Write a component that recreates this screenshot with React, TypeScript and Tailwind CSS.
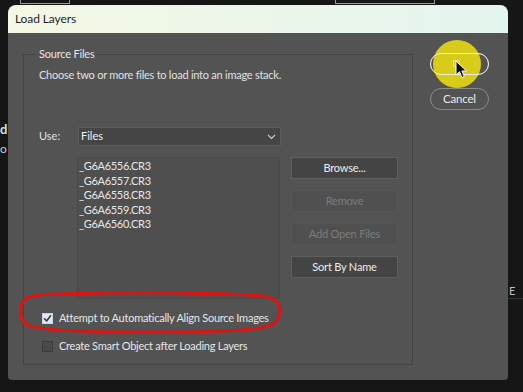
const font = { fontFamily: "Lato, 'Noto Sans', sans-serif" };

function PillButton({ label }: { label?: string }) {
  return (
    <div className="flex h-[22px] w-[59px] items-center justify-center rounded-full border border-[#8a8a8a] text-[11.5px] tracking-[-0.2px] text-[#e8e8e8]">
      {label}
    </div>
  );
}

function SideButton({ label, disabled = false }: { label: string; disabled?: boolean }) {
  return (
    <div
      className={`flex h-[22px] w-[107px] items-center justify-center border text-[11px] tracking-[-0.2px] ${
        disabled
          ? "border-[#565656] bg-[#505050] text-[#7c7c7c]"
          : "border-[#5e5e5e] bg-[#444444] text-[#eeeeee]"
      }`}
    >
      {label}
    </div>
  );
}

function Check({ checked, label }: { checked: boolean; label: string }) {
  return (
    <div className="flex h-[14px] items-center gap-[6px]">
      <div
        className={`flex h-[11px] w-[11px] items-center justify-center border ${
          checked ? "border-[#c8d4e4] bg-[#dfe8f4]" : "border-[#3c3c3c] bg-[#4a4a4a]"
        }`}
      >
        {checked ? (
          <svg width="9" height="9" viewBox="0 0 9 9" fill="none" stroke="#3a3a3a" strokeWidth="1.6" strokeLinecap="round" strokeLinejoin="round">
            <polyline points="1.5 4.8 3.6 7 7.6 1.8" />
          </svg>
        ) : null}
      </div>
      <span className="text-[11px] tracking-[-0.25px] text-[#e6e6e6]">{label}</span>
    </div>
  );
}

const files = ["_G6A6556.CR3", "_G6A6557.CR3", "_G6A6558.CR3", "_G6A6559.CR3", "_G6A6560.CR3"];

export default function App() {
  return (
    <div className="relative h-[392px] w-[523px] overflow-hidden bg-[#161616] pl-[8px] pt-[5px]" style={font}>
      {/* background bits behind the dialog */}
      <div className="absolute left-[20px] top-[-6px] h-[10px] w-[50px] border border-[#9a9a9a]" />
      <div className="absolute left-[335px] top-[-6px] h-[10px] w-[100px] border border-[#9a9a9a]" />
      <div className="absolute left-[0px] top-[120px] text-[13px] font-bold text-[#dddddd]">d</div>
      <div className="absolute left-[0px] top-[140px] text-[12px] text-[#cccccc]">o</div>
      <div className="absolute left-[509px] top-[283px] text-[11px] text-[#bbbbbb]">E</div>
      <div className="absolute left-[508px] top-[298px] h-[1px] w-[15px] bg-[#333333]" />

      <div className="flex h-[375px] w-[500px] flex-col overflow-hidden rounded-t-[8px] rounded-b-[4px] bg-[#535353]">
        <div className="flex h-[28px] items-center bg-gradient-to-r from-[#f4f8e4] to-[#e4f5ef] pl-[7px] text-[12px] tracking-[-0.1px] text-[#1e1e1e]">
          Load Layers
        </div>

        <div className="flex">
          {/* Source Files group */}
          <div className="relative ml-[15px] mt-[21px] h-[311px] w-[390px] border border-[#444444] pl-[15px]">
            <div className="absolute left-[12px] top-[-8px] bg-[#535353] px-[3px] text-[11px] leading-[14px] tracking-[-0.2px] text-[#e6e6e6]">
              Source Files
            </div>
            <div className="mt-[13px] text-[11px] leading-[14px] tracking-[-0.25px] text-[#e0e0e0]">
              Choose two or more files to load into an image stack.
            </div>

            <div className="mt-[45px] flex items-center">
              <span className="w-[39px] text-[11px] text-[#e0e0e0]">Use:</span>
              <div className="flex h-[19px] w-[203px] items-center justify-between border border-[#5c5c5c] bg-[#454545] pl-[2px] pr-[4px] text-[11px] text-[#f0f0f0]">
                Files
                <svg width="9" height="6" viewBox="0 0 9 6" fill="none" stroke="#cfcfcf" strokeWidth="1.1">
                  <polyline points="1 1 4.5 4.5 8 1" />
                </svg>
              </div>
            </div>

            <div className="mt-[11px] flex gap-[11px] pl-[38px]">
              <div className="h-[142px] w-[203px] border border-[#4a4a4a] bg-[#4f4f4f] pl-[1px] pt-[1px]">
                {files.map((f) => (
                  <div key={f} className="text-[11px] leading-[14.5px] tracking-[-0.3px] text-[#e8e8e8]">
                    {f}
                  </div>
                ))}
              </div>
              <div className="flex flex-col gap-[11px]">
                <SideButton label="Browse..." />
                <SideButton label="Remove" disabled />
                <SideButton label="Add Open Files" disabled />
                <SideButton label="Sort By Name" />
              </div>
            </div>

            <div className="mt-[12px] flex flex-col gap-[14px] pl-[3px]">
              <Check checked label="Attempt to Automatically Align Source Images" />
              <Check checked={false} label="Create Smart Object after Loading Layers" />
            </div>
          </div>

          {/* OK / Cancel */}
          <div className="ml-[17px] mt-[20px] flex flex-col gap-[13px]">
            <PillButton />
            <PillButton label="Cancel" />
          </div>
        </div>
      </div>

      {/* yellow click highlight */}
      <div className="absolute left-[433px] top-[40px] h-[48px] w-[48px] rounded-full bg-[#d9cb1a]" />
      <div className="absolute left-[430px] top-[53px] h-[22px] w-[59px] rounded-full border border-[#f0f0d8]" />
      <div className="absolute left-[453px] top-[60px] h-[7px] w-[7px] border border-[#efe38a]" />
      {/* cursor */}
      <svg className="absolute left-[455px] top-[60px]" width="14" height="20" viewBox="0 0 14 20">
        <path d="M1 1 L1 15 L4.5 11.8 L7 17.5 L9.3 16.5 L6.9 11 L11.5 11 Z" fill="#111111" stroke="#ffffff" strokeWidth="1" strokeLinejoin="round" />
      </svg>

      {/* red annotation */}
      <svg className="absolute left-[18px] top-[290px]" width="268" height="46" viewBox="0 0 268 46" fill="none">
        <path
          d="M40 4 C 120 2, 200 3, 245 6 C 262 8, 266 20, 258 32 C 250 41, 200 42, 130 42 C 70 42, 20 41, 8 34 C 1 28, 2 16, 6 10 C 12 5, 25 4, 40 4 Z"
          stroke="#e01212"
          strokeWidth="3"
        />
      </svg>
    </div>
  );
}
